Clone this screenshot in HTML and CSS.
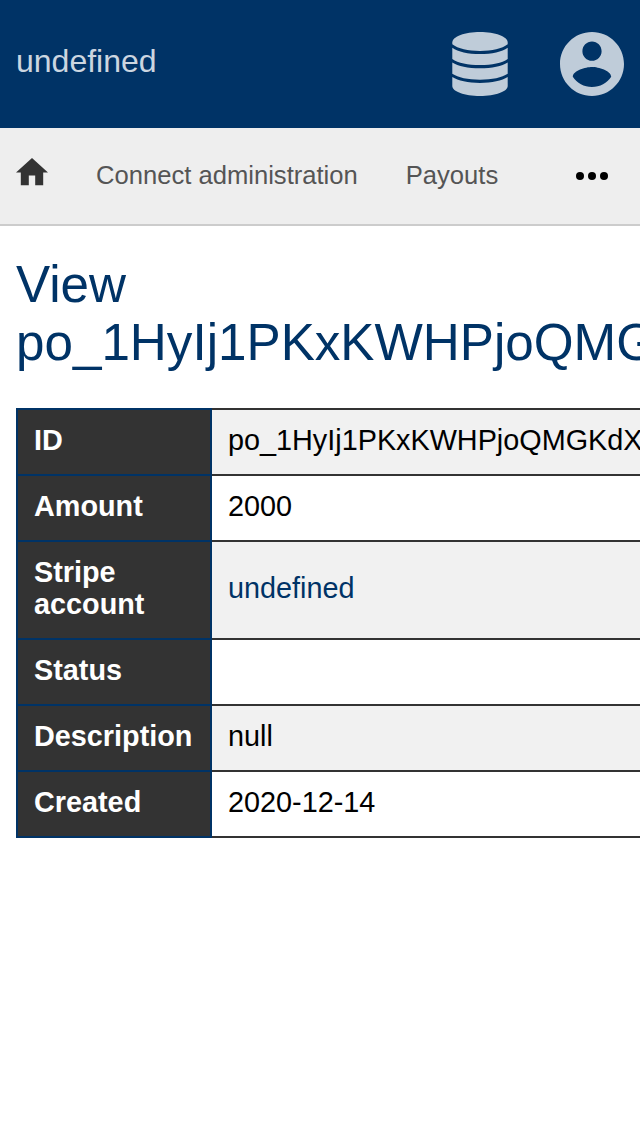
FILE: index.html
```html
<!DOCTYPE html>
<html lang="en">
<head>
<meta charset="utf-8">
<title>View payout</title>
<link rel="stylesheet" href="styles.css">
</head>
<body>
<header class="header">
  <div class="brand">undefined</div>
  <div class="menus">
    <svg class="menu-icon" viewBox="0 0 64 64">
      <path d="M4.300 10.500C4.300 4.500 17 0 32 0S59.700 4.500 59.700 10.500V12.300C54 16.800 44 19 32 19S10 16.800 4.300 12.300Z"/>
      <path d="M4.300 15.700C10 19.800 20 22 32 22S54 19.800 59.700 15.700V27C54 31 44 33 32 33S10 31 4.300 27Z"/>
      <path d="M4.300 30.400C10 34.200 20 36.200 32 36.200S54 34.200 59.700 30.400V41.800C54 45.700 44 47.700 32 47.700S10 45.700 4.300 41.800Z"/>
      <path d="M4.300 45.100C10 48.900 20 50.900 32 50.900S54 48.900 59.700 45.100V54C59.700 59.500 47.500 64 32 64S4.300 59.500 4.300 54Z"/>
    </svg>
    <svg class="menu-icon" viewBox="2 2 20 20">
      <path d="M12 2C6.480 2 2 6.480 2 12s4.480 10 10 10 10-4.480 10-10S17.520 2 12 2zm0 3c1.660 0 3 1.340 3 3s-1.340 3-3 3-3-1.340-3-3 1.340-3 3-3zm0 14.200c-2.500 0-4.710-1.280-6-3.220.03-1.990 4-3.080 6-3.080 1.990 0 5.970 1.090 6 3.080-1.290 1.940-3.500 3.220-6 3.220z"/>
    </svg>
  </div>
</header>
<nav class="navbar">
  <svg class="home" viewBox="2 3 20 17"><path d="M10 20v-6h4v6h5v-8h3L12 3 2 12h3v8z"/></svg>
  <a class="nav-link">Connect administration</a>
  <a class="nav-link">Payouts</a>
  <svg class="more" viewBox="0 0 32 8"><circle cx="4" cy="4" r="4"/><circle cx="16" cy="4" r="4"/><circle cx="28" cy="4" r="4"/></svg>
</nav>
<main class="content">
  <h1 class="title">View po_1HyIj1PKxKWHPjoQMGKdX</h1>
  <table class="details">
    <tr><th>ID</th><td>po_1HyIj1PKxKWHPjoQMGKdX</td></tr>
    <tr><th>Amount</th><td>2000</td></tr>
    <tr><th>Stripe account</th><td><a class="link">undefined</a></td></tr>
    <tr><th>Status</th><td></td></tr>
    <tr><th>Description</th><td>null</td></tr>
    <tr><th>Created</th><td>2020-12-14</td></tr>
  </table>
</main>
</body>
</html>
```
FILE: styles.css
```css
* { box-sizing: border-box; }
body {
  margin: 0;
  min-height: 1136px;
  overflow: hidden;
  background: #fff;
  color: #000;
  font-family: "Liberation Sans", Arial, sans-serif;
}
.header {
  display: flex;
  align-items: center;
  justify-content: space-between;
  height: 128px;
  padding: 0 16px;
  background: #003366;
}
.brand {
  padding-bottom: 6px;
  font-size: 32px;
  line-height: 36px;
  color: #ccd6e0;
}
.menus { display: flex; gap: 48px; }
.menu-icon { display: block; width: 64px; height: 64px; fill: #bfccd9; }
.navbar {
  display: flex;
  align-items: center;
  height: 98px;
  padding: 0 32px 0 16px;
  background: #eee;
  border-bottom: 2px solid #ccc;
}
.home { width: 32px; height: 27.2px; margin: 0 48px 8px 0; fill: #333; }
.nav-link {
  margin-right: 48px;
  padding-bottom: 2px;
  font-size: 25.6px;
  line-height: 30px;
  color: #555;
}
.more { width: 32px; height: 8px; margin-left: auto; fill: #000; }
.content { padding: 30px 16px 0; }
.title {
  margin: 0 0 36px;
  font-size: 51.2px;
  font-weight: 400;
  line-height: 58px;
  color: #003366;
}
.details {
  width: 656px;
  table-layout: fixed;
  border-collapse: separate;
  border-spacing: 0;
  border-top: 2px solid #333;
  font-size: 28.8px;
  line-height: 32px;
}
.details th,
.details td {
  height: 66px;
  padding: 14px 16px 18px;
  border-bottom: 2px solid #333;
  text-align: left;
}
.details th {
  width: 196px;
  background: #333;
  border: 2px solid #003366;
  border-top: 0;
  color: #fff;
}
.details tr:first-child th { box-shadow: 0 -2px #003366; }
.details tr:nth-child(odd) td { background: #f1f1f1; }
.link { color: #003366; }
```
